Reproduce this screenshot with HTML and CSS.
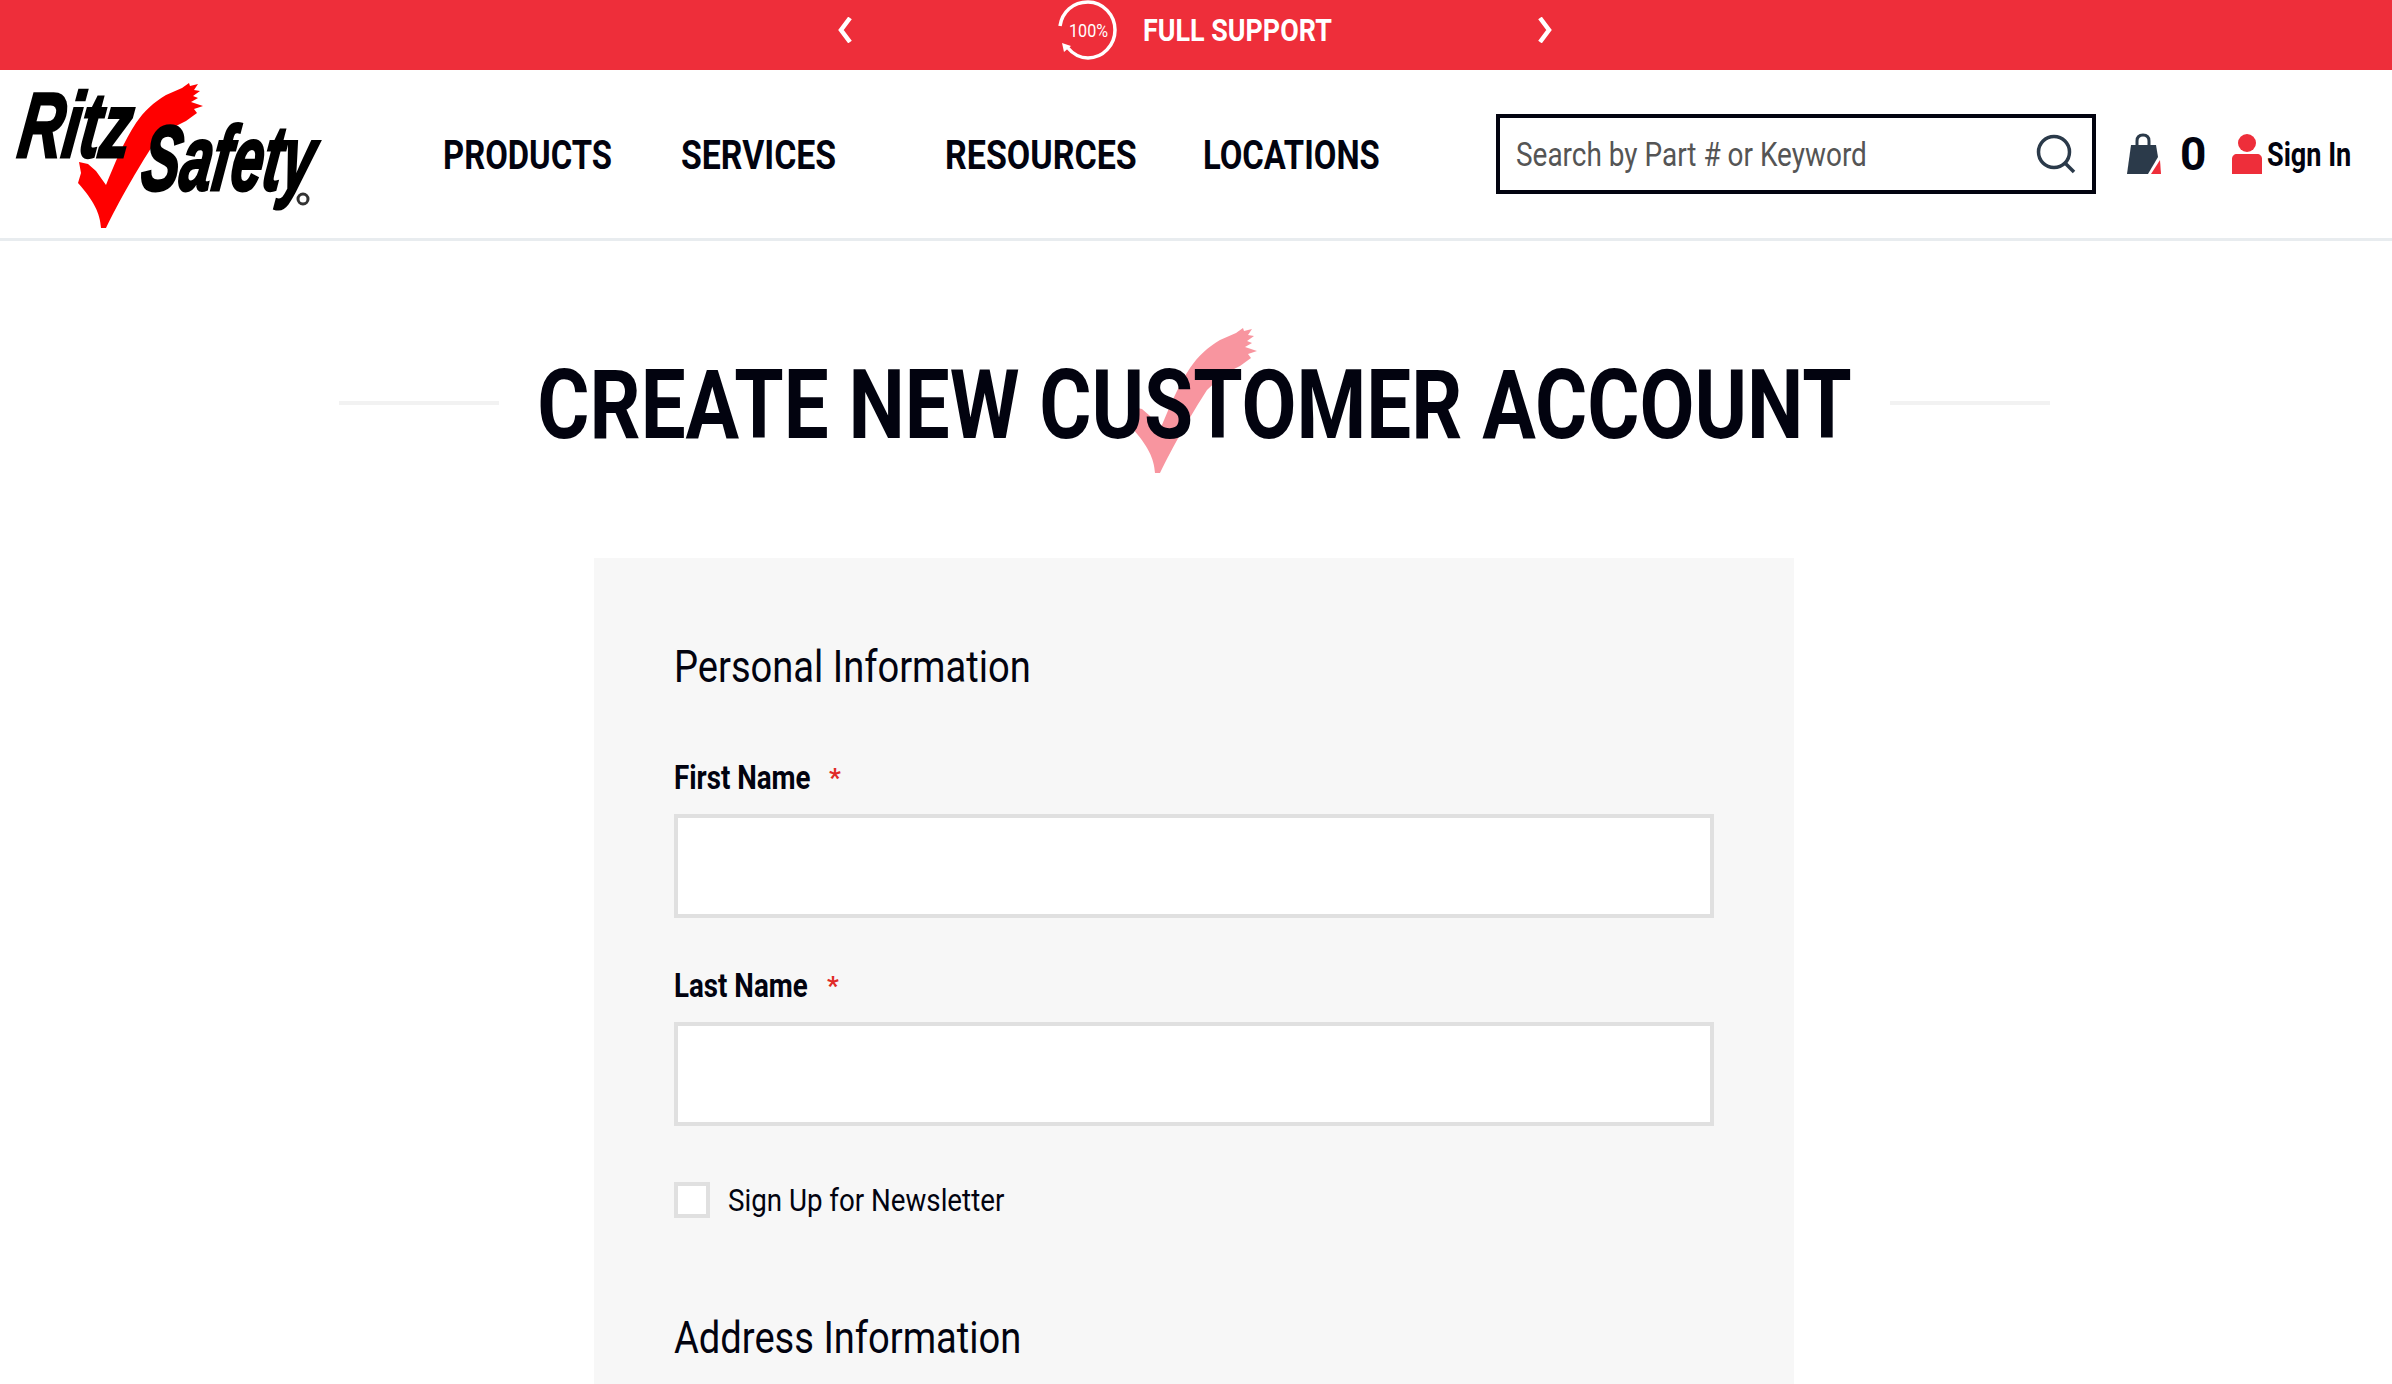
FILE: index.html
```html
<!DOCTYPE html>
<html lang="en">
<head>
    <meta charset="UTF-8">
    <title>Create New Customer Account</title>
    <link rel="stylesheet" href="styles.css">
</head>
<body>
    <svg class="defs" width="0" height="0">
        <symbol id="check" viewBox="0 0 126 146">
            <path d="M23 145 C22 130 16 118 0 100 L3 90 L1 79 L10 81 L18 88 L28 102 C36 82 46 58 58 40 C66 28 76 19 88 12 L104 5 L111 0 L112 3 L120 1 L116 7 L122 8 L115 13 L120 15 L113 19 L125 23 L116 26 L119 30 L108 38 L92 46 L75 62 C60 85 40 120 28 145 Z"/>
        </symbol>
    </svg>

    <div class="topbar">
        <div class="promo">
            <svg class="chev" viewBox="0 0 15 26"><path d="M13 1 L4 13 L13 25"/></svg>
            <div class="promo-mid">
                <svg class="promo-icon" viewBox="0 0 60 60">
                    <path d="M2 26 C4 12 15 2 30 2 C45 2 57 15 57 30 C57 45 45 58 30 58 C21 58 14 53 9 47"/>
                    <polygon class="fill" points="4,43 13,46 6,52"/>
                    <text x="11" y="37" textLength="39" lengthAdjust="spacingAndGlyphs">100%</text>
                </svg>
                <span class="promo-text"><span class="squeeze">FULL SUPPORT</span></span>
            </div>
            <svg class="chev" viewBox="0 0 15 26"><path d="M2 1 L11 13 L2 25"/></svg>
        </div>
    </div>

    <header class="header">
        <svg class="logo" viewBox="0 0 330 168">
            <use href="#check" x="78" y="13" width="126" height="146" class="logo-check"/>
            <text transform="translate(16 87) skewX(-8) scale(0.664 1)" class="logo-text">Ritz</text>
            <text transform="translate(139 120) skewX(-8) scale(0.623 1)" class="logo-text">Safety</text>
            <circle cx="303" cy="129" r="5" class="logo-reg"/>
        </svg>
        <nav class="nav">
            <a class="nav-link products"><span class="squeeze">PRODUCTS</span></a>
            <a class="nav-link services"><span class="squeeze">SERVICES</span></a>
            <a class="nav-link resources"><span class="squeeze">RESOURCES</span></a>
            <a class="nav-link locations"><span class="squeeze">LOCATIONS</span></a>
        </nav>
        <div class="search">
            <span class="search-text squeeze">Search by Part # or Keyword</span>
            <svg class="search-icon" viewBox="0 0 40 40">
                <circle cx="18" cy="18" r="15.5"/>
                <path d="M29 29 L38 38"/>
            </svg>
        </div>
        <svg class="bag" viewBox="0 0 34 42">
            <path class="bag-handle" d="M10 14 V8 C10 3 13 2 16 2 C19 2 22 3 22 8 V14"/>
            <path class="bag-body" d="M4 12 H29 L31 24 L21 41 H0 Z"/>
            <polygon class="bag-red" points="24,41 33,27 34,41"/>
        </svg>
        <span class="cart-count">0</span>
        <svg class="person" viewBox="0 0 30 40">
            <circle cx="15" cy="9" r="9"/>
            <path d="M5 20 H25 C28 20 30 22 30 25 V40 H0 V25 C0 22 2 20 5 20 Z"/>
        </svg>
        <a class="signin"><span class="squeeze">Sign In</span></a>
    </header>

    <main class="main">
        <div class="title-row">
            <span class="title-line"></span>
            <div class="title-wrap">
                <svg class="title-check"><use href="#check" width="126" height="146"/></svg>
                <h1 class="title">CREATE NEW CUSTOMER ACCOUNT</h1>
            </div>
            <span class="title-line"></span>
        </div>

        <form class="panel">
            <h2 class="section"><span class="squeeze">Personal Information</span></h2>
            <label class="label">
                <span class="label-name"><span class="squeeze">First Name</span></span>
                <span class="req">*</span>
            </label>
            <div class="input"></div>
            <label class="label label-last">
                <span class="label-name"><span class="squeeze">Last Name</span></span>
                <span class="req">*</span>
            </label>
            <div class="input"></div>
            <div class="news">
                <span class="checkbox"></span>
                <span class="news-text squeeze">Sign Up for Newsletter</span>
            </div>
            <h2 class="section section-address"><span class="squeeze">Address Information</span></h2>
        </form>
    </main>
</body>
</html>
```

FILE: styles.css
```css
* { margin: 0; padding: 0; box-sizing: border-box; }
html, body { height: 1384px; overflow: hidden; }
body { font-family: Roboto, sans-serif; color: #02030f; background: white; }
.defs { position: absolute; }
.squeeze { display: inline-block; white-space: nowrap; transform: scaleX(0.84); transform-origin: left center; }

/* top bar */
.topbar { height: 70px; background: #ee2e3a; display: flex; justify-content: center; padding: 0 2px 10px 0; }
.promo { width: 716px; display: flex; align-items: center; justify-content: space-between; color: white; }
.chev { width: 15px; height: 26px; fill: none; stroke: white; stroke-width: 4.5; }
.promo-mid { display: flex; align-items: center; gap: 25px; }
.promo-icon { width: 60px; height: 60px; }
.promo-icon path { fill: none; stroke: white; stroke-width: 3.5; }
.promo-icon .fill { fill: white; stroke: none; }
.promo-icon text { fill: white; font-size: 19px; }
.promo-text { width: 190px; font-size: 32px; font-weight: bold; }

/* header */
.header { height: 171px; border-bottom: 3px solid #e8ecef; display: flex; align-items: center; }
.logo { width: 330px; height: 168px; flex: none; }
.logo-check { fill: #f00; }
.logo-text { font-family: "Liberation Sans", sans-serif; font-size: 92px; font-weight: bold; font-style: italic; fill: black; stroke: black; stroke-width: 3px; }
.logo-reg { fill: none; stroke: #333; stroke-width: 3; }
.nav { display: flex; margin-left: 113px; margin-top: 3px; width: 1053px; font-size: 40px; font-weight: bold; }
.nav-link .squeeze { transform: scaleX(0.82); }
.products { width: 238px; }
.services { width: 264px; }
.services .squeeze { transform: scaleX(0.845); }
.resources { width: 258px; }
.resources .squeeze { transform: scaleX(0.85); }
.search { width: 600px; height: 80px; border: 4px solid #02030f; display: flex; align-items: center; justify-content: space-between; padding: 0 16px; }
.search-text { width: 400px; font-size: 33px; color: #555; transform: scaleX(0.847); }
.search-icon { width: 40px; height: 40px; fill: none; stroke: #2b3a4a; stroke-width: 3.5; }
.bag { width: 34px; height: 42px; margin-left: 31px; flex: none; }
.bag-handle { fill: none; stroke: #2b3a4a; stroke-width: 3; }
.bag-body { fill: #2b3a4a; }
.bag-red { fill: #ee2e3a; }
.cart-count { font-size: 46px; font-weight: bold; margin-left: 19px; width: 52px; }
.person { width: 30px; height: 40px; fill: #ee2e3a; flex: none; }
.signin { font-size: 33px; font-weight: bold; margin-left: 5px; white-space: nowrap; }
.signin .squeeze { transform: scaleX(0.82); }

/* page title */
.main { display: flex; flex-direction: column; align-items: center; padding-right: 4px; }
.title-row { display: flex; align-items: center; height: 317px; padding-top: 7px; }
.title-line { width: 160px; height: 4px; background: #f2f2f2; }
.title-wrap { position: relative; width: 1391px; }
.title-check { position: absolute; left: 633px; top: -27px; width: 126px; height: 146px; fill: #f8959f; }
.title { position: relative; display: flex; justify-content: center; top: 2px; font-size: 96px; font-weight: bold; white-space: nowrap; line-height: 1; transform: scaleX(0.831); }

/* form */
.panel { width: 1200px; height: 900px; background: #f7f7f7; padding: 80px; }
.section { font-size: 44px; font-weight: normal; line-height: 58px; }
.section .squeeze { transform: scaleX(0.866); }
.label { display: flex; font-size: 33px; font-weight: bold; line-height: 40px; margin-top: 62px; margin-bottom: 16px; }
.label-last { margin-top: 48px; }
.label-name { width: 155px; }
.label-last .label-name { width: 153px; }
.req { color: #e02b27; font-size: 26px; }
.input { height: 104px; background: white; border: 4px solid #e0e0e0; }
.news { display: flex; align-items: center; gap: 18px; margin-top: 55px; }
.checkbox { width: 36px; height: 36px; background: white; border: 4px solid #e0e0e0; }
.news-text { font-size: 32px; transform: scaleX(0.866); }
.section-address { margin-top: 90px; }
```
